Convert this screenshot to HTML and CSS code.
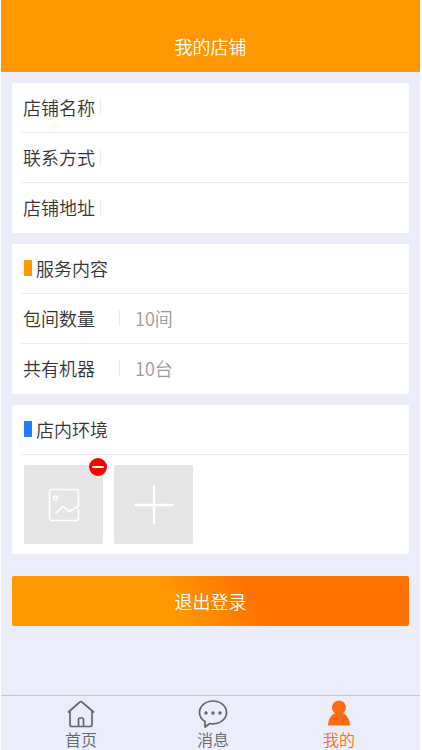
FILE: index.html
```html
<!DOCTYPE html>
<html lang="zh-CN">
<head>
<meta charset="utf-8">
<meta name="viewport" content="width=device-width, initial-scale=1">
<title>我的店铺</title>
<link rel="stylesheet" href="styles.css">
</head>
<body>
<div class="app">
  <header class="header"><h1 class="title">我的店铺</h1></header>
  <main class="main">
    <section class="card">
      <div class="row"><label class="label" for="name">店铺名称</label><input class="field" id="name" type="text"></div>
      <div class="row"><label class="label" for="contact">联系方式</label><input class="field" id="contact" type="text"></div>
      <div class="row"><label class="label" for="address">店铺地址</label><input class="field" id="address" type="text"></div>
    </section>
    <section class="card card-wide">
      <div class="row"><h2 class="heading">服务内容</h2></div>
      <div class="row"><label class="label" for="rooms">包间数量</label><input class="field" id="rooms" type="text" value="10间"></div>
      <div class="row"><label class="label" for="machines">共有机器</label><input class="field" id="machines" type="text" value="10台"></div>
    </section>
    <section class="card">
      <div class="row"><h2 class="heading heading-blue">店内环境</h2></div>
      <div class="photos">
        <div class="tile">
          <svg class="photo-icon" viewBox="0 0 32 34" fill="none" stroke="#fff" stroke-width="1.7" stroke-linecap="round" stroke-linejoin="round" aria-hidden="true">
            <path d="M30.5 21.5V30a2.500 2.500 0 0 1-2.500 2.500H4A2.500 2.500 0 0 1 1.500 30V4A2.500 2.500 0 0 1 4 1.500h24A2.500 2.500 0 0 1 30.500 4v14L21.500 23.500 15 18.500 8 25"/>
            <circle cx="7.500" cy="10" r="1.800"/>
          </svg>
          <button class="remove" type="button" aria-label="删除">
            <svg viewBox="0 0 18 18" aria-hidden="true"><path d="M4 9h10" stroke="#fff" stroke-width="2" stroke-linecap="round"/></svg>
          </button>
        </div>
        <button class="tile" type="button" aria-label="添加">
          <svg class="plus-icon" viewBox="0 0 40 40" stroke="#fff" stroke-width="2.4" stroke-linecap="round" aria-hidden="true"><path d="M20 1.500v37M1.500 20h37"/></svg>
        </button>
      </div>
    </section>
    <button class="logout" type="button">退出登录</button>
  </main>
  <nav class="tabs">
    <a class="tab" href="#home">
      <svg class="tab-icon" viewBox="0 0 30 28" fill="none" stroke="#666" stroke-width="1.700" stroke-linecap="round" stroke-linejoin="round" aria-hidden="true"><path d="M2.500 12 13.300 2.500a2.300 2.300 0 0 1 3.200 0L27.500 12M4 11v13.500a2 2 0 0 0 2 2h18a2 2 0 0 0 2-2V11M12.500 26V19.500a1.500 1.500 0 0 1 1.500-1.500h2a1.500 1.500 0 0 1 1.500 1.500V26"/></svg>
      <span>首页</span>
    </a>
    <a class="tab" href="#messages">
      <svg class="tab-icon" viewBox="0 0 30 28" aria-hidden="true"><path d="M7 21.500C3.500 19.300 1.500 16 1.500 12.400 1.500 6.200 7.300 1 15 1s13.500 5.200 13.500 11.400S22.700 23.800 15 23.800c-1.200 0-2.300 0-3.300-.3L7 27z" fill="none" stroke="#666" stroke-width="1.700" stroke-linejoin="round"/><g fill="#666"><circle cx="8" cy="13" r="1.700"/><circle cx="15" cy="13" r="1.700"/><circle cx="22" cy="13" r="1.700"/></g></svg>
      <span>消息</span>
    </a>
    <a class="tab tab-active" href="#mine" aria-current="page">
      <svg class="tab-icon" viewBox="0 0 30 28" fill="#ff6a13" aria-hidden="true"><circle cx="15" cy="7.500" r="7"/><path d="M4 25.500c0-6.500 3.500-11.500 8-12.500h6c4.500 1 8 6 8 12.500z"/></svg>
      <span>我的</span>
    </a>
  </nav>
</div>
</body>
</html>
```
FILE: styles.css
```css
* {
  box-sizing: border-box;
}

body {
  margin: 0;
  background: #fff;
  color: #333;
  font-family: "Noto Sans CJK SC", sans-serif;
  font-size: 18px;
  font-weight: 350;
  line-height: 24px;
}

button,
input {
  margin: 0;
  padding: 0;
  border: 0;
  font: inherit;
}

.app {
  display: flex;
  flex-direction: column;
  min-height: 100vh;
  margin: 0 2px 0 1px;
  background: #ebedfa;
}

.header {
  padding: 34px 0 14px;
  background: #ff9800;
  color: #fff;
  text-align: center;
}

.title,
.heading {
  margin: 0;
  font-size: 18px;
  font-weight: 350;
}

.main {
  display: flex;
  flex: 1;
  flex-direction: column;
  gap: 11px;
  padding: 11px 11px 0;
}

.card {
  padding-left: 9px;
  border-radius: 2px;
  background: #fff;
}

.row {
  display: flex;
  align-items: center;
  height: 50px;
  padding: 0 0 2px 2px;
  border-bottom: 1px solid #ebebeb;
}

.row:last-child {
  border-bottom: 0;
}

.label {
  display: flex;
  align-items: center;
  justify-content: space-between;
  width: 78px;
}

.label::after {
  width: 1px;
  height: 16px;
  background: #ebebeb;
  content: "";
}

.card-wide .label {
  width: 97px;
}

.field {
  flex: 1;
  min-width: 0;
  height: 28px;
  padding-left: 15px;
  background: transparent;
  color: #999;
  outline: 0;
}

.heading {
  display: flex;
  align-items: center;
  gap: 4px;
  padding-left: 1px;
}

.heading::before {
  width: 8px;
  height: 16px;
  background: #ff9800;
  content: "";
}

.heading-blue::before {
  background: #1f7cff;
}

.photos {
  display: flex;
  gap: 11px;
  padding: 10px 3px;
}

.tile {
  position: relative;
  display: grid;
  place-items: center;
  width: 79px;
  height: 79px;
  border-radius: 2px;
  background: #e5e5e5;
}

.photo-icon {
  width: 32px;
  height: 34px;
}

.plus-icon {
  width: 40px;
  height: 40px;
}

.remove {
  position: absolute;
  top: -7px;
  right: -4px;
  width: 18px;
  height: 18px;
  border-radius: 50%;
  background: #f00;
}

.remove svg {
  display: block;
}

.logout {
  height: 50px;
  margin-top: 11px;
  border-radius: 2px;
  background: linear-gradient(60deg, #ff9800 41%, #ff7200 61%);
  color: #fff;
}

.tabs {
  display: grid;
  grid-template-columns: 11fr 11fr 10fr;
  padding: 4px 21px 0 14px;
  border-top: 1px solid #c4c4d0;
}

.tab {
  display: flex;
  flex-direction: column;
  align-items: center;
  color: #666;
  font-size: 16px;
  line-height: 22px;
  text-decoration: none;
}

.tab-active {
  color: #ff6a13;
}

.tab-icon {
  width: 30px;
  height: 28px;
}
```
